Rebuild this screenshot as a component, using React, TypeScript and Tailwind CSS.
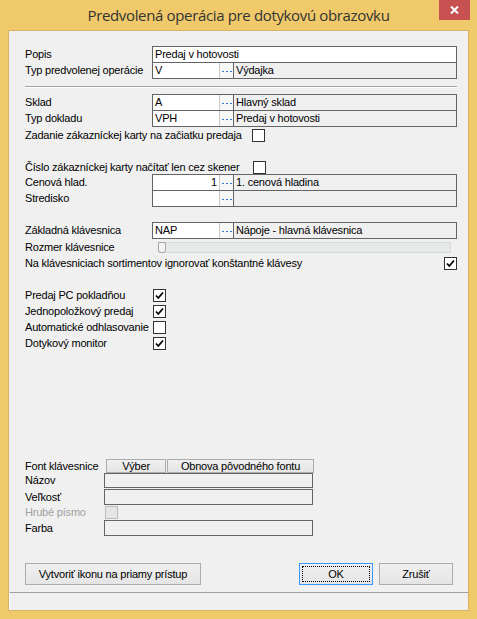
import React from "react";

const F = { fontFamily: '"Liberation Sans", Arial, sans-serif' };

function Dots() {
  return (
    <div className="w-[14px] h-full border-l border-[#c8c8c8] bg-[#f7f7f7] flex items-center justify-center gap-[2px] pt-[1px]">
      <div className="w-[2px] h-[1px] bg-[#2f78e0]" />
      <div className="w-[2px] h-[1px] bg-[#2f78e0]" />
      <div className="w-[2px] h-[1px] bg-[#2f78e0]" />
    </div>
  );
}

function Lookup({ label, code, desc, right, className = "" }: { label: string; code: string; desc: string; right?: boolean; className?: string }) {
  return (
    <div className={"flex items-center h-[17px] " + className}>
      <div className="w-[127px] whitespace-nowrap">{label}</div>
      <div className="flex h-full w-[82px] border border-[#646464] bg-white">
        <div className={"flex-1 px-[2px] leading-[15px] whitespace-nowrap " + (right ? "text-right" : "")}>{code}</div>
        <Dots />
      </div>
      <div className="-ml-px flex-1 h-full border border-[#646464] px-[2px] leading-[15px] whitespace-nowrap">{desc}</div>
    </div>
  );
}

function Check({ checked, disabled }: { checked?: boolean; disabled?: boolean }) {
  return (
    <div
      className={
        "w-[13px] h-[13px] shrink-0 border flex items-center justify-center " +
        (disabled ? "border-[#bcbcbc] bg-[#e6e6e6]" : "border-[#333333] bg-white")
      }
    >
      {checked && (
        <svg width="9" height="9" viewBox="0 0 9 9">
          <path d="M1 4.5 L3.3 7 L8 1.5" stroke="#000" strokeWidth="1.8" fill="none" />
        </svg>
      )}
    </div>
  );
}

function Btn({ children, className = "" }: { children: React.ReactNode; className?: string }) {
  return (
    <div
      className={
        "flex items-center justify-center border border-[#acacac] bg-gradient-to-b from-[#f0f0f0] to-[#e5e5e5] whitespace-nowrap " +
        className
      }
    >
      {children}
    </div>
  );
}

export default function App() {
  return (
    <div className="w-[477px] h-[619px] bg-[#f0c96b] flex flex-col text-[11px] tracking-[-0.2px] text-black" style={F}>
      <div className="relative h-[30px] shrink-0 flex items-center justify-center">
        <div
          className="text-[15px] text-[#333333] tracking-[-0.35px]"
          style={{ fontFamily: '"Open Sans", "Noto Sans", sans-serif' }}
        >
          Predvolená operácia pre dotykovú obrazovku
        </div>
        <div className="absolute right-[7px] top-0 w-[31px] h-[20px] bg-[#c75050] flex items-center justify-center">
          <svg width="9" height="8" viewBox="0 0 9 8">
            <path d="M1 0.5 L8 7.5 M8 0.5 L1 7.5" stroke="#fff" strokeWidth="2" />
          </svg>
        </div>
      </div>
      <div className="mx-[8px] flex-1 border border-[#d6b264] bg-[#f0f0f0] flex flex-col">
        <div className="pl-[16px] pr-[11px] flex flex-col">
          <div className="mt-[15px] flex items-center h-[17px]">
            <div className="w-[127px]">Popis</div>
            <div className="flex-1 h-full border border-[#646464] bg-white px-[2px] leading-[15px]">Predaj v hotovosti</div>
          </div>
          <Lookup className="-mt-px" label="Typ predvolenej operácie" code="V" desc="Výdajka" />
          <div className="mt-[7px] h-[2px] border-t border-[#a0a0a0] border-b border-b-white" />
          <Lookup className="mt-[6px]" label="Sklad" code="A" desc="Hlavný sklad" />
          <Lookup className="-mt-px" label="Typ dokladu" code="VPH" desc="Predaj v hotovosti" />
          <div className="mt-[2px] flex items-center h-[13px]">
            <div className="w-[227px] whitespace-nowrap">Zadanie zákazníckej karty na začiatku predaja</div>
            <Check />
          </div>
          <div className="mt-[19px] flex items-center h-[13px]">
            <div className="w-[228px] whitespace-nowrap">Číslo zákazníckej karty načítať len cez skener</div>
            <Check />
          </div>
          <Lookup className="mt-0" label="Cenová hlad." code="1" desc="1. cenová hladina" right />
          <Lookup className="-mt-px" label="Stredisko" code="" desc="" />
          <Lookup className="mt-[15px]" label="Základná klávesnica" code="NAP" desc="Nápoje - hlavná klávesnica" />
          <div className="mt-[3px] flex items-center h-[11px]">
            <div className="w-[133px] whitespace-nowrap">Rozmer klávesnice</div>
            <div className="w-[293px] h-full bg-[#e7eaea] border border-[#d9d9d9] flex">
              <div className="-ml-px -mt-px w-[8px] h-[11px] bg-[#f4f4f4] border border-[#a7a7a7] rounded-b-[3px]" />
            </div>
          </div>
          <div className="mt-[4px] flex items-center h-[13px] justify-between">
            <div className="whitespace-nowrap">Na klávesniciach sortimentov ignorovať konštantné klávesy</div>
            <Check checked />
          </div>
          {[
            ["Predaj PC pokladňou", true],
            ["Jednopoložkový predaj", true],
            ["Automatické odhlasovanie", false],
            ["Dotykový monitor", true],
          ].map(([t, c], i) => (
            <div key={i} className={(i === 0 ? "mt-[19px]" : "mt-[3px]") + " flex items-center h-[13px]"}>
              <div className="w-[128px] whitespace-nowrap">{t as string}</div>
              <Check checked={c as boolean} />
            </div>
          ))}
          <div className="mt-[109px] flex items-center h-[14px]">
            <div className="w-[81px] whitespace-nowrap">Font klávesnice</div>
            <Btn className="w-[60px] h-full">Výber</Btn>
            <Btn className="ml-px w-[147px] h-full">Obnova pôvodného fontu</Btn>
          </div>
          <div className="flex items-center h-[15px]">
            <div className="w-[79px]">Názov</div>
            <div className="w-[209px] h-full border border-[#646464]" />
          </div>
          <div className="mt-[1px] flex items-center h-[16px]">
            <div className="w-[79px]">Veľkosť</div>
            <div className="w-[209px] h-full border border-[#646464]" />
          </div>
          <div className="mt-[1px] flex items-center h-[13px]">
            <div className="w-[80px] text-[#a0a0a0]">Hrubé písmo</div>
            <Check disabled />
          </div>
          <div className="mt-[1px] flex items-center h-[16px]">
            <div className="w-[79px]">Farba</div>
            <div className="w-[209px] h-full border border-[#646464]" />
          </div>
          <div className="mt-[27px] flex items-center h-[22px]">
            <Btn className="w-[176px] h-full">Vytvoriť ikonu na priamy prístup</Btn>
            <div className="ml-auto w-[74px] h-full border border-[#3399ff] bg-gradient-to-b from-[#f0f0f0] to-[#e5e5e5] p-[2px]">
              <div className="w-full h-full border border-dotted border-black flex items-center justify-center">OK</div>
            </div>
            <Btn className="ml-[6px] mr-[4px] w-[74px] h-full">Zrušiť</Btn>
          </div>
        </div>
        <div className="mt-auto h-[18px] border-t border-[#a0a0a0] border-l border-l-white" />
      </div>
      <div className="h-[8px] shrink-0" />
    </div>
  );
}
